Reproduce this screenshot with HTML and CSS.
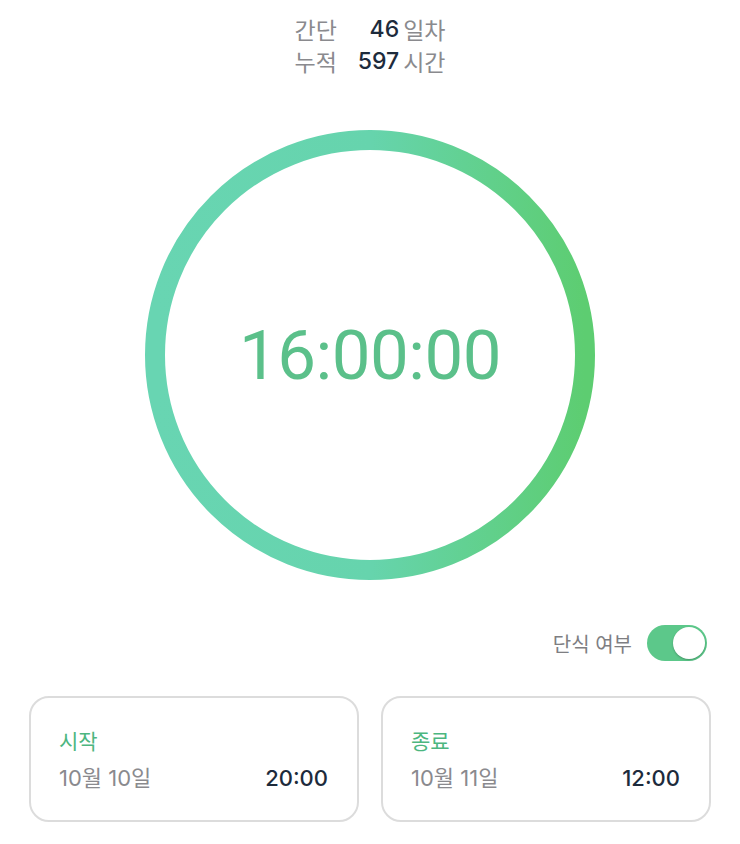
FILE: index.html
```html
<!DOCTYPE html>
<html lang="ko">
<head>
<meta charset="utf-8">
<link rel="stylesheet" href="styles.css">
</head>
<body>
<div class="page">
  <div class="stats">
    <span class="label">간단</span><span class="num">46</span><span class="unit">일차</span>
    <span class="label">누적</span><span class="num">597</span><span class="unit">시간</span>
  </div>

  <div class="ring">
    <svg class="ring-svg" width="450" height="450" viewBox="0 0 450 450">
      <defs>
        <linearGradient id="rg" x1="0" y1="0" x2="1" y2="0">
          <stop offset="0" stop-color="#68d5b2"/>
          <stop offset="0.5" stop-color="#66d4ad"/>
          <stop offset="1" stop-color="#5dcd71"/>
        </linearGradient>
      </defs>
      <circle cx="225" cy="225" r="215" fill="none" stroke="url(#rg)" stroke-width="20"/>
    </svg>
    <div class="time">16:00:00</div>
  </div>

  <div class="toggle-row">
    <span class="toggle-label">단식 여부</span>
    <div class="toggle"><div class="knob"></div></div>
  </div>

  <div class="cards">
    <div class="card">
      <div class="card-title">시작</div>
      <div class="card-row"><span class="date">10월 10일</span><span class="clock">20:00</span></div>
    </div>
    <div class="card">
      <div class="card-title">종료</div>
      <div class="card-row"><span class="date">10월 11일</span><span class="clock">12:00</span></div>
    </div>
  </div>
</div>
</body>
</html>
```
FILE: styles.css
```css
* { box-sizing: border-box; }
body {
  margin: 0;
  background: #fff;
  font-family: "Inter", "Noto Sans CJK KR", sans-serif;
}
.page {
  width: 740px;
  display: flex;
  flex-direction: column;
  align-items: center;
}
.stats {
  margin-top: 13px;
  display: grid;
  grid-template-columns: auto auto auto;
  column-gap: 4px;
  row-gap: 0;
  font-size: 23px;
  line-height: 32px;
}
.stats .label {
  color: #8a8a8e;
  font-family: "Noto Sans CJK KR", sans-serif;
  font-size: 23px;
  padding-right: 17px;
}
.stats .num {
  color: #1d2b3c;
  text-align: right;
  font-weight: 500;
}
.stats .unit {
  color: #8a8a8e;
  font-family: "Noto Sans CJK KR", sans-serif;
  font-size: 23px;
}
.ring {
  margin-top: 53px;
  width: 450px;
  height: 450px;
  position: relative;
  display: flex;
  align-items: center;
  justify-content: center;
}
.ring-svg {
  position: absolute;
  left: 0;
  top: 0;
}
.time {
  position: relative;
  font-family: "Roboto", sans-serif;
  font-size: 69px;
  font-weight: 400;
  color: #5bc08a;
  letter-spacing: -0.5px;
}
.toggle-row {
  align-self: stretch;
  margin-top: 45px;
  padding-right: 33px;
  display: flex;
  justify-content: flex-end;
  align-items: center;
  gap: 15px;
}
.toggle-label {
  font-family: "Noto Sans CJK KR", sans-serif;
  font-size: 20px;
  color: #7e7e82;
}
.toggle {
  width: 60px;
  height: 36px;
  border-radius: 18px;
  background: #5cc88a;
  padding: 2px;
  display: flex;
  justify-content: flex-end;
}
.knob {
  width: 32px;
  height: 32px;
  border-radius: 50%;
  background: #fff;
  box-shadow: 0 1px 2px rgba(0,0,0,0.25);
}
.cards {
  align-self: stretch;
  margin-top: 35px;
  padding: 0 29px;
  display: grid;
  grid-template-columns: 1fr 1fr;
  gap: 22px;
}
.card {
  height: 126px;
  border: 2px solid #dcdcdc;
  border-radius: 20px;
  padding: 27px 29px 0 28px;
}
.card-title {
  font-family: "Noto Sans CJK KR", sans-serif;
  font-size: 21px;
  line-height: 30px;
  color: #4cb680;
}
.card-row {
  margin-top: 7px;
  display: flex;
  justify-content: space-between;
  align-items: center;
  line-height: 32px;
}
.date {
  font-family: "Inter", "Noto Sans CJK KR", sans-serif;
  font-size: 22px;
  color: #8a8a8e;
}
.clock {
  font-size: 22px;
  font-weight: 500;
  color: #1d2b3c;
}
```
